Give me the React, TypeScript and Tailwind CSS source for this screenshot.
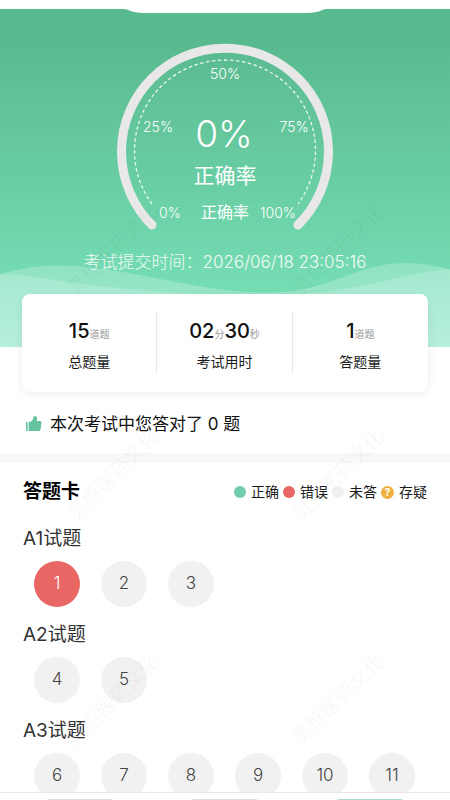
import { clsx } from "clsx";

const stats = [
  { label: "总题量", parts: [{ value: "15", unit: "道题" }] },
  {
    label: "考试用时",
    parts: [
      { value: "02", unit: "分" },
      { value: "30", unit: "秒" },
    ],
  },
  { label: "答题量", parts: [{ value: "1", unit: "道题" }] },
];

const groups = [
  { title: "A1试题", questions: [1, 2, 3] },
  { title: "A2试题", questions: [4, 5] },
  { title: "A3试题", questions: [6, 7, 8, 9, 10, 11] },
];

const wrongQuestions = [1];

function ScoreGauge() {
  return (
    <svg
      viewBox="0 0 220 190"
      width="220"
      height="190"
      fill="#fff"
      textAnchor="middle"
      role="img"
      aria-label="正确率 0%"
    >
      <path
        d="M37 183A103.5 103.5 0 1 1 183 183"
        fill="none"
        stroke="#e8e8e8"
        strokeWidth="9"
        strokeLinecap="round"
      />
      <path
        d="M37 162A90.5 90.5 0 1 1 183 162"
        fill="none"
        stroke="#fff"
        strokeOpacity="0.85"
        strokeWidth="1.3"
        strokeDasharray="3.5 2.5"
      />
      <g fontSize="14" fontWeight="300">
        <text x="110" y="37">50%</text>
        <text x="43" y="90">25%</text>
        <text x="179" y="90">75%</text>
        <text x="55" y="176">0%</text>
        <text x="163" y="176">100%</text>
      </g>
      <text x="109" y="105" fontSize="37" fontWeight="300">0%</text>
      <text x="110" y="141" fontSize="21">正确率</text>
      <text x="110" y="176" fontSize="16">正确率</text>
    </svg>
  );
}

function Waves() {
  return (
    <svg
      viewBox="0 0 450 90"
      preserveAspectRatio="none"
      className="absolute inset-x-0 bottom-0 h-[90px] w-full"
      aria-hidden="true"
    >
      <defs>
        <linearGradient id="wave" x1="0" y1="0" x2="0" y2="1">
          <stop offset="0" stopColor="#c9f3e5" stopOpacity="0.33" />
          <stop offset="1" stopColor="#d2f6ea" stopOpacity="0.45" />
        </linearGradient>
      </defs>
      <path
        d="M0 17C25 10 45 7 75 9C130 13 180 28 225 33C255 36 280 37 305 32C345 22 370 6 405 6C425 6 438 9 450 13V90H0Z"
        fill="url(#wave)"
      />
      <path
        d="M0 17C30 17 60 25 100 29C170 37 280 44 345 32C390 24 415 15 450 12V90H0Z"
        fill="url(#wave)"
      />
    </svg>
  );
}

function ThumbIcon() {
  return (
    <svg viewBox="0 0 16 16" className="h-4 w-4" fill="#66c39f" aria-hidden="true">
      <path d="M0 6H1.600V15H0Z" />
      <path d="M2.600 6.200C5.500 5.800 7 4.400 7.200 2 7.300.7 7.900 0 8.900 0c1.400 0 2.300 1 2.200 2.600L10.900 5h2.900c1.300 0 2 .8 1.800 2l-1 6.200c-.2 1.200-1 1.800-2.100 1.800H2.600Z" />
    </svg>
  );
}

function Legend() {
  return (
    <ul className="flex items-center gap-1 text-sm text-[#1a1a1a]">
      <li className="flex items-center gap-[5px]">
        <span className="h-3 w-3 rounded-full bg-[#72cbac]" />
        正确
      </li>
      <li className="flex items-center gap-[5px]">
        <span className="h-3 w-3 rounded-full bg-[#e86764]" />
        错误
      </li>
      <li className="flex items-center gap-[5px]">
        <span className="h-3 w-3 rounded-full bg-[#f0f0f0]" />
        未答
      </li>
      <li className="flex items-center gap-[5px]">
        <span className="flex h-[13px] w-[13px] items-center justify-center rounded-full bg-[#efb03f] text-[10px] font-bold text-white">
          ?
        </span>
        存疑
      </li>
    </ul>
  );
}

function Watermark() {
  return (
    <div
      className="pointer-events-none absolute inset-0 grid auto-rows-[225px] grid-cols-2 overflow-hidden pt-[137px] text-xl text-black/4"
      aria-hidden="true"
    >
      {[0, 1, 2, 3, 4, 5].map((i) => (
        <div key={i} className="flex items-center justify-center">
          <span className="-rotate-45 whitespace-nowrap">灵枢医药文化</span>
        </div>
      ))}
    </div>
  );
}

export default function App() {
  return (
    <div className="relative flex h-screen flex-col overflow-hidden bg-white font-['Inter','Noto_Sans_CJK_SC',sans-serif]">
      <main className="min-h-0 flex-1 overflow-hidden">
        <header className="relative h-[9px] bg-white">
          <svg
            viewBox="0 0 210 13"
            className="absolute top-0 left-1/2 z-10 h-[13px] w-[210px] -translate-x-1/2"
            fill="#fff"
            aria-hidden="true"
          >
            <path d="M0 0H210V8C202 9 199 13 188 13H23C12 13 9 9 0 8Z" />
          </svg>
        </header>

        <section className="relative flex flex-col items-center bg-linear-to-b from-[#5aba8f] from-10% to-[#76deb5] to-85% pt-[33px] pb-[73px] text-white">
          <Waves />
          <ScoreGauge />
          <p className="relative mt-[18px] text-[17px] leading-6 font-light text-white/90">
            考试提交时间：2026/06/18 23:05:16
          </p>
        </section>

        <section className="relative mx-[22px] -mt-[53px] grid grid-cols-3 divide-x divide-[#e8e8e8] rounded-lg bg-white py-[18px] shadow-[0_2px_10px_rgba(0,0,0,0.07)]">
          {stats.map((stat) => (
            <div key={stat.label} className="flex h-[62px] flex-col items-center pt-[5px]">
              <p className="flex items-baseline text-xl leading-7 font-medium text-[#111]">
                {stat.parts.map((part) => (
                  <span key={part.unit}>
                    {part.value}
                    <span className="text-[10px] font-normal text-[#999]">{part.unit}</span>
                  </span>
                ))}
              </p>
              <p className="mt-[2px] text-sm leading-6 text-[#1a1a1a]">{stat.label}</p>
            </div>
          ))}
        </section>

        <p className="mt-5 mb-[17px] flex items-center gap-2 px-[26px] text-[17px] leading-6 text-[#111]">
          <ThumbIcon />
          本次考试中您答对了 0 题
        </p>

        <div className="h-[10px] bg-[#f8f8f8]" />

        <section className="px-[23px] pt-[17px]">
          <div className="mb-[21px] flex h-6 items-center justify-between">
            <h2 className="text-[19px] font-bold text-black">答题卡</h2>
            <Legend />
          </div>
          {groups.map((group) => (
            <div key={group.title} className="mb-[14px]">
              <h3 className="text-[19px] leading-7 text-[#333]">{group.title}</h3>
              <div className="mt-2 flex flex-wrap gap-[21px] pl-[11px]">
                {group.questions.map((n) => (
                  <button
                    key={n}
                    type="button"
                    className={clsx(
                      "h-[46px] w-[46px] rounded-full text-[17px] font-light",
                      wrongQuestions.includes(n)
                        ? "bg-[#e86764] text-white"
                        : "bg-[#f1f1f1] text-[#444]"
                    )}
                  >
                    {n}
                  </button>
                ))}
              </div>
            </div>
          ))}
        </section>
      </main>

      <footer className="relative z-10 grid h-2 shrink-0 grid-cols-3 overflow-hidden border-t border-[#e8e8e8] bg-white px-2 pt-[6px]">
        <div className="mx-auto h-9 w-[76px] rounded-lg border border-[#ddd]" />
        <div className="mx-auto h-9 w-[76px] rounded-lg border border-[#ddd]" />
        <div className="mx-auto h-9 w-[76px] rounded-lg border border-[#a5dccb]" />
      </footer>

      <Watermark />
    </div>
  );
}
